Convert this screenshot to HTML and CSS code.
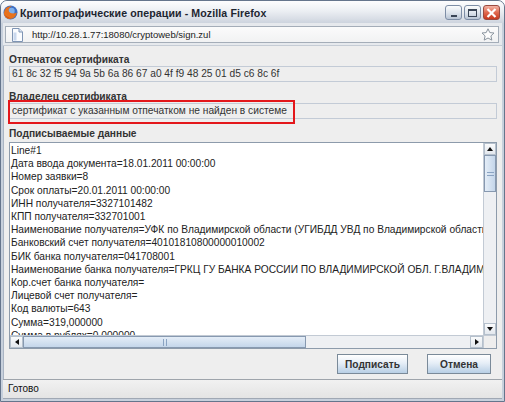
FILE: index.html
```html
<!DOCTYPE html>
<html>
<head>
<meta charset="utf-8">
<link rel="stylesheet" href="styles.css">
</head>
<body>
<div class="window">
  <div class="titlebar">
    <svg class="ff-icon" width="15" height="15" viewBox="0 0 15 15">
      <circle cx="7.5" cy="7.5" r="7" fill="#3d6fc4"/>
      <circle cx="8.5" cy="6" r="3.2" fill="#7fb0ec"/>
      <path d="M1 9 C1 3 5 0.8 9 1.2 C6 2.5 5 4.5 6 6.5 C7 8.5 10.5 9 13.8 7.8 C13 11.5 10.5 14 7 14 C4 14 1.5 12 1 9 Z" fill="#e8721c"/>
      <path d="M2 10 C3 12.5 5.5 13.6 8 13.4 C5.5 12.5 3.5 11.5 2 10 Z" fill="#c94a10"/>
    </svg>
    <span class="title">Криптографические операции - Mozilla Firefox</span>
    <div class="tb-buttons">
      <span class="tbtn"><span class="glyph-min"></span></span>
      <span class="tbtn"><span class="glyph-max"></span></span>
      <span class="tbtn close">
        <svg width="11" height="10" viewBox="0 0 11 10"><path d="M1.5 1 L9.5 9 M9.5 1 L1.5 9" stroke="#fff" stroke-width="2.2"/></svg>
      </span>
    </div>
  </div>
  <div class="urlbar">
    <div class="urlfield">
      <svg class="page-icon" width="11" height="14" viewBox="0 0 11 14">
        <path d="M0.5 0.5 H7 L10.5 4 V13.5 H0.5 Z" fill="#fafcff" stroke="#7f95b4"/>
        <path d="M7 0.5 V4 H10.5" fill="#dce6f4" stroke="#7f95b4"/>
        <rect x="1.5" y="4.5" width="3" height="8" fill="#c9d8ee"/>
      </svg>
      <span class="url">http://10.28.1.77:18080/cryptoweb/sign.zul</span>
      <svg class="star" width="14" height="13" viewBox="0 0 14 13">
        <path d="M7 0.8 L8.8 4.6 L13 5 L9.9 7.9 L10.8 12.1 L7 10 L3.2 12.1 L4.1 7.9 L1 5 L5.2 4.6 Z" fill="#fdfdfd" stroke="#8a949e" stroke-width="1"/>
      </svg>
    </div>
  </div>
  <div class="content">
    <div class="label">Отпечаток сертификата</div>
    <div class="field">61 8c 32 f5 94 9a 5b 6a 86 67 a0 4f f9 48 25 01 d5 c6 8c 6f</div>
    <div class="label">Владелец сертификата</div>
    <div class="field owner">сертификат с указанным отпечатком не найден в системе<span class="highlight"></span></div>
    <div class="label last">Подписываемые данные</div>
    <div class="textarea">
      <div class="ta-main">
        <div class="ta-text">Line#1
Дата ввода документа=18.01.2011 00:00:00
Номер заявки=8
Срок оплаты=20.01.2011 00:00:00
ИНН получателя=3327101482
КПП получателя=332701001
Наименование получателя=УФК по Владимирской области (УГИБДД УВД по Владимирской области)
Банковский счет получателя=40101810800000010002
БИК банка получателя=041708001
Наименование банка получателя=ГРКЦ ГУ БАНКА РОССИИ ПО ВЛАДИМИРСКОЙ ОБЛ. Г.ВЛАДИМИР
Кор.счет банка получателя=
Лицевой счет получателя=
Код валюты=643
Сумма=319,000000
Сумма в рублях=0,000000
Назначение платежа=</div>
        <div class="vscroll">
          <div class="sb-btn"><span class="tri-up"></span></div>
          <div class="vtrack">
            <div class="vthumb"><span class="grip-h"></span></div>
          </div>
          <div class="sb-btn"><span class="tri-down"></span></div>
        </div>
      </div>
      <div class="hscroll">
        <div class="sb-btn h"><span class="tri-left"></span></div>
        <div class="htrack">
          <div class="hthumb"><span class="grip-v"></span></div>
        </div>
        <div class="sb-btn h"><span class="tri-right"></span></div>
        <div class="corner"></div>
      </div>
    </div>
    <div class="buttons">
      <button class="btn sign">Подписать</button>
      <button class="btn cancel">Отмена</button>
    </div>
  </div>
  <div class="status">Готово</div>
</div>
</body>
</html>
```

FILE: styles.css
```css
* { box-sizing: border-box; }
body { margin: 0; background: #ffffff; }

.window {
  width: 505px;
  height: 402px;
  border: 1px solid #65758c;
  border-radius: 7px 7px 0 0;
  background: #c7d0dc;
  padding: 0 2px 2px 2px;
  display: flex;
  flex-direction: column;
  overflow: hidden;
  font-family: "Liberation Sans", Arial, sans-serif;
}

.titlebar {
  height: 22px;
  margin: 0 -2px;
  padding: 0 4px 0 2px;
  display: flex;
  align-items: center;
  background: linear-gradient(#fdfdfe, #eceff3 45%, #d9dee6 80%, #cdd4de);
  flex-shrink: 0;
}
.ff-icon { flex-shrink: 0; margin-top: 1px; }
.title {
  margin-left: 2px;
  font-weight: bold;
  font-size: 10.6px;
  color: #1d2530;
  letter-spacing: 0.1px;
  margin-top: 2px;
}
.tb-buttons { margin-left: auto; display: flex; gap: 2px; margin-top: 1px; }
.tbtn {
  width: 17px;
  height: 15px;
  border: 1px solid #7e8ea6;
  border-radius: 3px;
  background: linear-gradient(#fbfcfd, #dfe5ed 50%, #b9c5d5);
  display: flex;
  align-items: center;
  justify-content: center;
  position: relative;
}
.tbtn.close {
  border-color: #9a4a40;
  background: linear-gradient(#f3b2a4, #e06a50 50%, #c8391f);
}
.glyph-min { width: 6px; height: 2px; background: #3a4556; margin-top: 7px; }
.glyph-max { width: 9px; height: 8px; border: 1px solid #3a4556; border-top-width: 2px; }

.urlbar {
  height: 23px;
  background: #e6e9ed;
  padding: 3px 3px 3px 2px;
  flex-shrink: 0;
  border-bottom: 1px solid #c5ccd5;
}
.urlfield {
  height: 17px;
  border: 1px solid #a4adb8;
  background: linear-gradient(#fbfbfb, #f1f2f3);
  display: flex;
  align-items: center;
  padding-left: 6px;
  padding-right: 3px;
}
.page-icon { flex-shrink: 0; }
.url {
  margin-left: 9px;
  font-size: 9.5px;
  color: #222;
}
.star { margin-left: auto; }

.content {
  flex: 1;
  background: #eeeeee;
  padding: 8px 5px 0 5px;
  display: flex;
  flex-direction: column;
  min-height: 0;
  border-left: 1px solid #a9b4c3;
}

.label {
  font-weight: bold;
  font-size: 10.2px;
  line-height: 12px;
  color: #333333;
  margin-top: 9px;
}
.label:first-child { margin-top: 0; }
.label.last { margin-bottom: 2px; }

.field {
  height: 16px;
  border: 1px solid #c3cbd6;
  background: #eeeeee;
  font-size: 10.2px;
  line-height: 14px;
  color: #333333;
  padding-left: 2px;
  white-space: nowrap;
  position: relative;
}
.highlight {
  position: absolute;
  left: -2px;
  top: -4px;
  width: 287px;
  height: 24px;
  border: 2.5px solid #e3171b;
}

.textarea {
  height: 207px;
  border: 1px solid #8d9bab;
  background: #ffffff;
  display: flex;
  flex-direction: column;
}
.ta-main { flex: 1; display: flex; min-height: 0; }
.ta-text {
  flex: 1;
  overflow: hidden;
  white-space: pre;
  font-size: 10.2px;
  line-height: 13.2px;
  color: #222222;
  padding: 1px 0 0 1px;
}

.vscroll {
  width: 13px;
  display: flex;
  flex-direction: column;
  background: #eef0f3;
  border-left: 1px solid #c2cad4;
}
.sb-btn {
  height: 12px;
  flex-shrink: 0;
  background: linear-gradient(#fafbfc, #e3e8ee);
  border: 1px solid #b5c0cc;
  display: flex;
  align-items: center;
  justify-content: center;
}
.sb-btn.h { width: 13px; height: auto; }
.vtrack { flex: 1; position: relative; }
.vthumb {
  margin-top: 0;
  height: 37px;
  border: 1px solid #8799b0;
  background: linear-gradient(90deg, #e4edf7, #c4d6ea);
  display: flex;
  align-items: center;
  justify-content: center;
}
.grip-h { width: 7px; height: 4px; border-top: 1px solid #8aa3c2; border-bottom: 1px solid #8aa3c2; }

.hscroll {
  height: 13px;
  display: flex;
  background: #eef0f3;
  border-top: 1px solid #c2cad4;
}
.htrack { flex: 1; display: flex; }
.hthumb {
  width: 283px;
  border: 1px solid #8799b0;
  background: linear-gradient(#e4edf7, #c4d6ea);
  display: flex;
  align-items: center;
  justify-content: center;
}
.grip-v { width: 4px; height: 7px; border-left: 1px solid #8aa3c2; border-right: 1px solid #8aa3c2; }
.corner { width: 13px; background: #eeeeee; border-left: 1px solid #c2cad4; }

.tri-up { width: 0; height: 0; border-left: 3.5px solid transparent; border-right: 3.5px solid transparent; border-bottom: 4px solid #111; }
.tri-down { width: 0; height: 0; border-left: 3.5px solid transparent; border-right: 3.5px solid transparent; border-top: 4px solid #111; }
.tri-left { width: 0; height: 0; border-top: 3.5px solid transparent; border-bottom: 3.5px solid transparent; border-right: 4px solid #111; }
.tri-right { width: 0; height: 0; border-top: 3.5px solid transparent; border-bottom: 3.5px solid transparent; border-left: 4px solid #111; }

.buttons {
  margin-top: 5px;
  display: flex;
  justify-content: flex-end;
  gap: 19px;
  padding-right: 6px;
}
.btn {
  height: 20px;
  border: 1px solid #7a8a99;
  background: linear-gradient(#ffffff, #e6eef7 45%, #b8cfe5);
  font-family: "Liberation Sans", Arial, sans-serif;
  font-weight: bold;
  font-size: 10.2px;
  color: #333333;
  padding: 0;
}
.btn.sign { width: 71px; }
.btn.cancel { width: 64px; }

.status {
  height: 20px;
  flex-shrink: 0;
  border-top: 1px solid #9ea4ab;
  background: linear-gradient(#f1f1f1, #e4e4e4);
  font-size: 10px;
  line-height: 18px;
  color: #111;
  padding-left: 5px;
  margin: 0 0 0 0;
  border-bottom: 1px solid #a0a8b4;
}
```
